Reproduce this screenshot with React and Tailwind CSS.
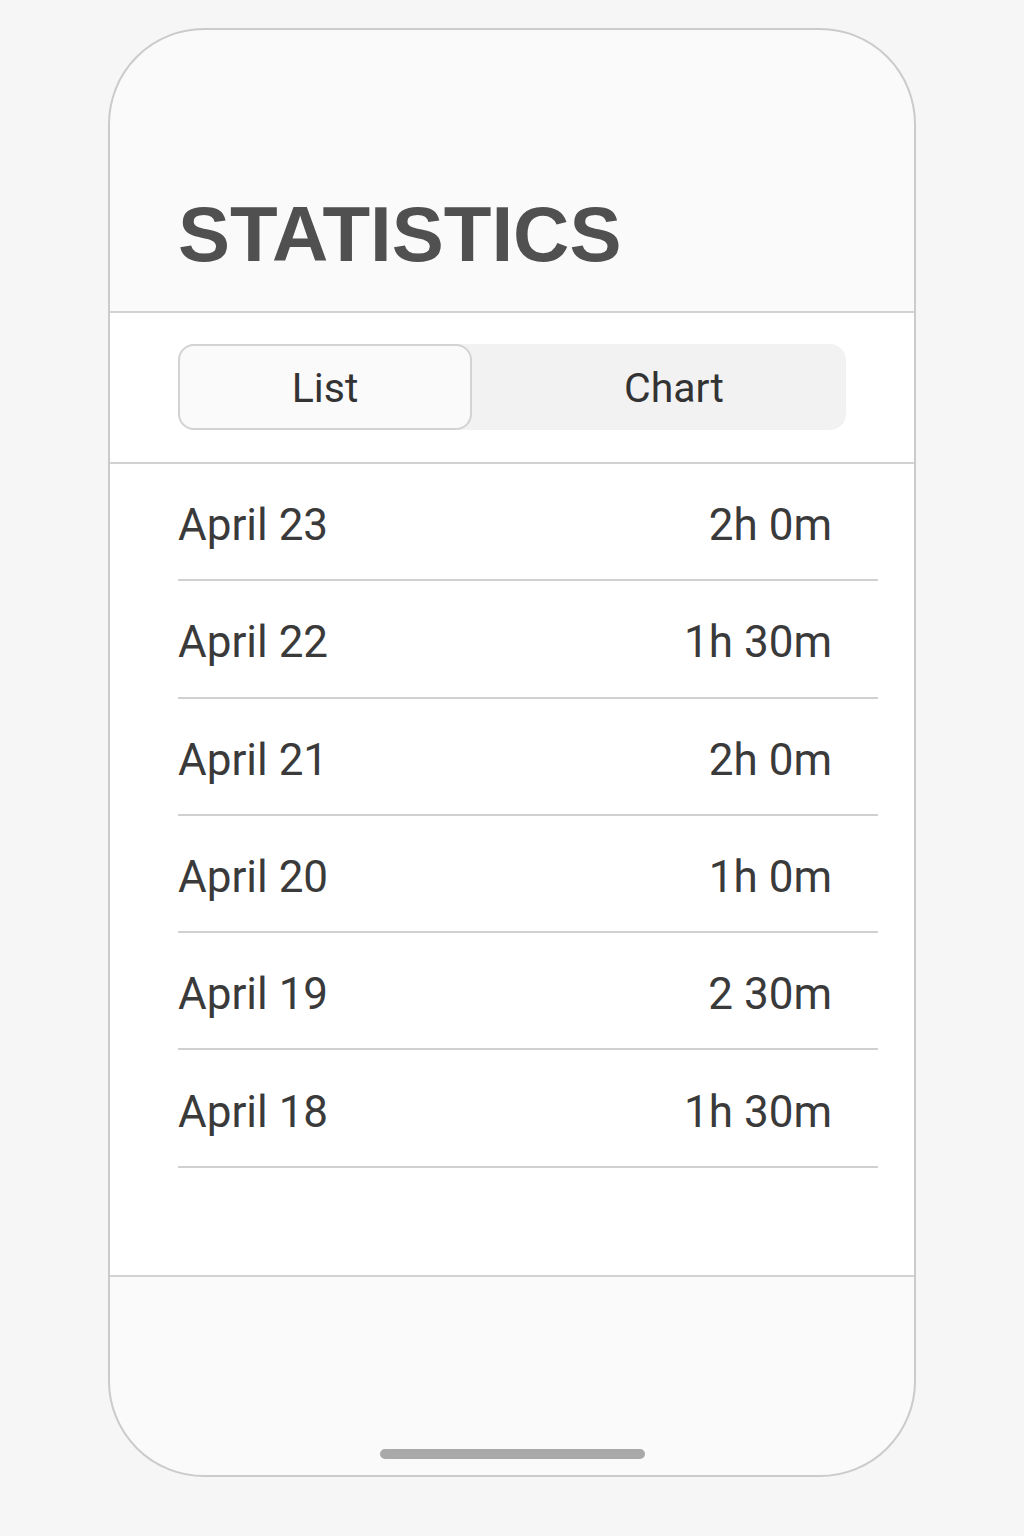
import React from "react";

const rows = [
  ["April 23", "2h 0m"],
  ["April 22", "1h 30m"],
  ["April 21", "2h 0m"],
  ["April 20", "1h 0m"],
  ["April 19", "2 30m"],
  ["April 18", "1h 30m"],
];

export default function App() {
  return (
    <div className="min-h-[1536px] w-[1024px] bg-[#f6f6f6] pt-[28px] pl-[108px]">
      <div className="w-[808px] h-[1449px] rounded-[96px] border-2 border-[#cbcbcb] bg-[#fafafa] overflow-hidden flex flex-col">
        <div className="h-[283px] flex items-end pl-[68px] pb-[38px] border-b-2 border-[#d2d2d2] shrink-0">
          <h1
            className="text-[78px] leading-none font-bold text-[#505050]"
            style={{ fontFamily: '"Liberation Sans", Arial, sans-serif' }}
          >
            STATISTICS
          </h1>
        </div>
        <div className="h-[151px] bg-white border-b-2 border-[#d2d2d2] pt-[31px] pl-[68px] shrink-0">
          <div
            className="w-[668px] h-[86px] rounded-[16px] bg-[#f2f2f2] flex text-[41px] font-normal text-[#333333]"
            style={{ fontFamily: "Roboto, sans-serif" }}
          >
            <div className="w-[294px] h-full rounded-[16px] border-2 border-[#d3d3d3] bg-[#fafafa] flex items-center justify-center pt-[3px]">
              List
            </div>
            <div className="flex-1 h-full flex items-center justify-center pl-[30px] pt-[3px]">Chart</div>
          </div>
        </div>
        <div
          className="h-[813px] bg-white border-b-2 border-[#d2d2d2] pl-[68px] shrink-0"
          style={{ fontFamily: "Roboto, sans-serif" }}
        >
          {rows.map(([d, t]) => (
            <div
              key={d}
              className="w-[700px] h-[117.3px] border-b-2 border-[#d0d0d0] flex items-center justify-between pr-[46px] pt-[7px] text-[44px] text-[#3a3a3a]"
            >
              <span>{d}</span>
              <span>{t}</span>
            </div>
          ))}
        </div>
        <div className="flex-1 flex items-end justify-center pb-[16px]">
          <div className="w-[265px] h-[10px] rounded-full bg-[#a9a9a9]" />
        </div>
      </div>
    </div>
  );
}
